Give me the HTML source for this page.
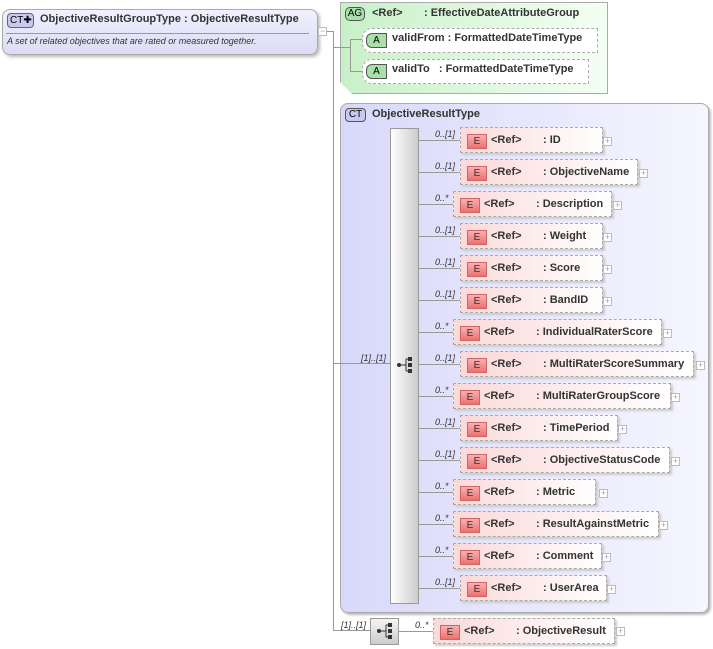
<!DOCTYPE html><html><head><style>
body{margin:0;width:713px;height:649px;background:#fff;position:relative;font-family:"Liberation Sans",sans-serif;overflow:hidden}
div{position:absolute;box-sizing:border-box}
.l{background:#999}
.e{height:26px;border:1px dashed #aaa;background:linear-gradient(to right,#fbd9d9,#fff);box-shadow:2px 2px 2px #ccc;font-size:11px;font-weight:bold;color:#333;white-space:nowrap}
.e .i{left:6px;top:6px;width:20px;height:15px;border:1px solid #c66;background:linear-gradient(#f8b0b0,#f07070);font-size:10px;font-weight:normal;text-align:center;line-height:14px;color:#333}
.e .r{left:30px;top:6px}
.e .n{left:82px;top:6px}
.p{width:9px;height:9px;border:1px solid #bbb;background:#fff;font-size:9px;line-height:7px;text-align:center;color:#aaa}
.c{font-size:9px;font-style:italic;color:#333}
</style></head><body>
<!-- top box -->
<div style="left:2px;top:9px;width:316px;height:46px;border:1px solid #aaa;border-radius:8px;background:linear-gradient(#f0f0ff,#dcdcf4);box-shadow:2px 2px 3px #bbb"></div>
<div style="left:7px;top:13px;width:27px;height:15px;border:1px solid #666;border-radius:4px;background:#c8c8f0;font-size:10px;line-height:13px;padding-left:2px">CT✚</div>
<div style="left:40px;top:13px;font-size:11px;font-weight:bold;color:#333">ObjectiveResultGroupType : ObjectiveResultType</div>
<div style="left:6px;top:33px;width:303px;height:1px;background:#999"></div>
<div style="left:7px;top:36px;font-size:9px;font-style:italic;color:#333">A set of related objectives that are rated or measured together.</div>
<div class="p" style="left:318px;top:27px">−</div>
<div class="l" style="left:327px;top:31px;width:6px;height:1px"></div>
<div class="l" style="left:333px;top:31px;width:1px;height:599px"></div>
<!-- AG -->
<div style="left:340px;top:2px;width:268px;height:92px;border:1px solid #aaa;background:linear-gradient(to right,#c8f0c8,#f4fff4);clip-path:polygon(0 0,100% 0,100% 100%,12px 100%,0 80px);box-shadow:2px 2px 2px #bbb"></div>
<div style="left:345px;top:7px;width:20px;height:14px;border:1px solid #555;border-radius:5px;background:#a8e0a8;font-size:10px;line-height:12px;text-align:center">AG</div>
<div style="left:372px;top:7px;font-size:11px;font-weight:bold;color:#333">&lt;Ref&gt;</div>
<div style="left:424px;top:7px;font-size:11px;font-weight:bold;color:#333">: EffectiveDateAttributeGroup</div>
<div class="l" style="left:333px;top:47px;width:17px;height:1px"></div>
<div class="l" style="left:350px;top:39px;width:1px;height:32px"></div>
<div class="l" style="left:350px;top:39px;width:12px;height:1px"></div>
<div class="l" style="left:350px;top:71px;width:12px;height:1px"></div>
<div style="left:362px;top:28px;width:236px;height:25px;border:1px dashed #aaa;background:#fff;border-radius:10px 0 0 10px"></div>
<div style="left:366px;top:33px;width:21px;height:15px;border:1px solid #555;border-radius:6px 0 0 6px;background:#a8e0a8;font-size:10px;text-align:center;line-height:13px">A</div>
<div style="left:392px;top:32px;font-size:11px;font-weight:bold;color:#333">validFrom : FormattedDateTimeType</div>
<div style="left:362px;top:59px;width:227px;height:25px;border:1px dashed #aaa;background:#fff;border-radius:10px 0 0 10px"></div>
<div style="left:366px;top:64px;width:21px;height:15px;border:1px solid #555;border-radius:6px 0 0 6px;background:#a8e0a8;font-size:10px;text-align:center;line-height:13px">A</div>
<div style="left:392px;top:63px;font-size:11px;font-weight:bold;color:#333">validTo &nbsp;&nbsp;: FormattedDateTimeType</div>
<!-- CT -->
<div style="left:340px;top:103px;width:369px;height:510px;border:1px solid #aaa;border-radius:8px;background:linear-gradient(to right,#d8d8fa,#f6f6ff);box-shadow:2px 2px 2px #bbb"></div>
<div style="left:345px;top:108px;width:21px;height:14px;border:1px solid #555;border-radius:4px;background:#c8c8f0;font-size:10px;line-height:12px;text-align:center">CT</div>
<div style="left:372px;top:108px;font-size:11px;font-weight:bold;color:#333">ObjectiveResultType</div>
<div class="l" style="left:333px;top:363px;width:57px;height:1px"></div>
<div class="c" style="left:361px;top:353px">[1]..[1]</div>
<div style="left:390px;top:128px;width:29px;height:476px;border:1px solid #999;background:linear-gradient(to right,#fff,#ccc)"></div>
<svg style="position:absolute;left:397px;top:357px" width="18" height="16"><circle cx="2" cy="8" r="2" fill="#333"/><line x1="2" y1="8" x2="9" y2="8" stroke="#333"/><line x1="9" y1="2" x2="9" y2="14" stroke="#333"/><line x1="9" y1="2" x2="14" y2="2" stroke="#333"/><line x1="9" y1="14" x2="14" y2="14" stroke="#333"/><rect x="11" y="0" width="4" height="4" fill="#333"/><rect x="11" y="6" width="4" height="4" fill="#333"/><rect x="11" y="12" width="4" height="4" fill="#333"/></svg>

<div class="l" style="left:419px;top:140px;width:41px;height:1px"></div><div class="c" style="left:435px;top:129px">0..[1]</div>
<div class="e" style="left:460px;top:127px;width:143px"><div class="i">E</div><div class="r">&lt;Ref&gt;</div><div class="n">: ID</div></div><div class="p" style="left:603px;top:137px">+</div>

<div class="l" style="left:419px;top:172px;width:41px;height:1px"></div><div class="c" style="left:435px;top:161px">0..[1]</div>
<div class="e" style="left:460px;top:159px;width:178px"><div class="i">E</div><div class="r">&lt;Ref&gt;</div><div class="n">: ObjectiveName</div></div><div class="p" style="left:639px;top:169px">+</div>

<div class="l" style="left:419px;top:204px;width:34px;height:1px"></div><div class="c" style="left:435px;top:193px">0..*</div>
<div class="e" style="left:453px;top:191px;width:159px"><div class="i">E</div><div class="r">&lt;Ref&gt;</div><div class="n">: Description</div></div><div class="p" style="left:613px;top:201px">+</div>

<div class="l" style="left:419px;top:236px;width:41px;height:1px"></div><div class="c" style="left:435px;top:225px">0..[1]</div>
<div class="e" style="left:460px;top:223px;width:143px"><div class="i">E</div><div class="r">&lt;Ref&gt;</div><div class="n">: Weight</div></div><div class="p" style="left:603px;top:233px">+</div>

<div class="l" style="left:419px;top:268px;width:41px;height:1px"></div><div class="c" style="left:435px;top:257px">0..[1]</div>
<div class="e" style="left:460px;top:255px;width:143px"><div class="i">E</div><div class="r">&lt;Ref&gt;</div><div class="n">: Score</div></div><div class="p" style="left:603px;top:265px">+</div>

<div class="l" style="left:419px;top:300px;width:41px;height:1px"></div><div class="c" style="left:435px;top:289px">0..[1]</div>
<div class="e" style="left:460px;top:287px;width:143px"><div class="i">E</div><div class="r">&lt;Ref&gt;</div><div class="n">: BandID</div></div><div class="p" style="left:603px;top:297px">+</div>

<div class="l" style="left:419px;top:332px;width:34px;height:1px"></div><div class="c" style="left:435px;top:321px">0..*</div>
<div class="e" style="left:453px;top:319px;width:209px"><div class="i">E</div><div class="r">&lt;Ref&gt;</div><div class="n">: IndividualRaterScore</div></div><div class="p" style="left:663px;top:329px">+</div>

<div class="l" style="left:419px;top:364px;width:41px;height:1px"></div><div class="c" style="left:435px;top:353px">0..[1]</div>
<div class="e" style="left:460px;top:351px;width:234px"><div class="i">E</div><div class="r">&lt;Ref&gt;</div><div class="n">: MultiRaterScoreSummary</div></div><div class="p" style="left:696px;top:361px">+</div>

<div class="l" style="left:419px;top:396px;width:34px;height:1px"></div><div class="c" style="left:435px;top:385px">0..*</div>
<div class="e" style="left:453px;top:383px;width:218px"><div class="i">E</div><div class="r">&lt;Ref&gt;</div><div class="n">: MultiRaterGroupScore</div></div><div class="p" style="left:671px;top:393px">+</div>

<div class="l" style="left:419px;top:428px;width:41px;height:1px"></div><div class="c" style="left:435px;top:417px">0..[1]</div>
<div class="e" style="left:460px;top:415px;width:158px"><div class="i">E</div><div class="r">&lt;Ref&gt;</div><div class="n">: TimePeriod</div></div><div class="p" style="left:618px;top:425px">+</div>

<div class="l" style="left:419px;top:460px;width:41px;height:1px"></div><div class="c" style="left:435px;top:449px">0..[1]</div>
<div class="e" style="left:460px;top:447px;width:210px"><div class="i">E</div><div class="r">&lt;Ref&gt;</div><div class="n">: ObjectiveStatusCode</div></div><div class="p" style="left:671px;top:457px">+</div>

<div class="l" style="left:419px;top:492px;width:34px;height:1px"></div><div class="c" style="left:435px;top:481px">0..*</div>
<div class="e" style="left:453px;top:479px;width:143px"><div class="i">E</div><div class="r">&lt;Ref&gt;</div><div class="n">: Metric</div></div><div class="p" style="left:599px;top:489px">+</div>

<div class="l" style="left:419px;top:524px;width:34px;height:1px"></div><div class="c" style="left:435px;top:513px">0..*</div>
<div class="e" style="left:453px;top:511px;width:206px"><div class="i">E</div><div class="r">&lt;Ref&gt;</div><div class="n">: ResultAgainstMetric</div></div><div class="p" style="left:659px;top:521px">+</div>

<div class="l" style="left:419px;top:556px;width:34px;height:1px"></div><div class="c" style="left:435px;top:545px">0..*</div>
<div class="e" style="left:453px;top:543px;width:149px"><div class="i">E</div><div class="r">&lt;Ref&gt;</div><div class="n">: Comment</div></div><div class="p" style="left:602px;top:553px">+</div>

<div class="l" style="left:419px;top:588px;width:41px;height:1px"></div><div class="c" style="left:435px;top:577px">0..[1]</div>
<div class="e" style="left:460px;top:575px;width:147px"><div class="i">E</div><div class="r">&lt;Ref&gt;</div><div class="n">: UserArea</div></div><div class="p" style="left:607px;top:585px">+</div>

<!-- bottom -->
<div class="l" style="left:333px;top:630px;width:37px;height:1px"></div>
<div class="c" style="left:341px;top:620px">[1]..[1]</div>
<div style="left:370px;top:618px;width:29px;height:27px;border:1px solid #999;background:linear-gradient(#f4f4f4,#ccc)"></div>
<svg style="position:absolute;left:377px;top:623px" width="18" height="16"><circle cx="2" cy="8" r="2" fill="#333"/><line x1="2" y1="8" x2="9" y2="8" stroke="#333"/><line x1="9" y1="2" x2="9" y2="14" stroke="#333"/><line x1="9" y1="2" x2="14" y2="2" stroke="#333"/><line x1="9" y1="14" x2="14" y2="14" stroke="#333"/><rect x="11" y="0" width="4" height="4" fill="#333"/><rect x="11" y="6" width="4" height="4" fill="#333"/><rect x="11" y="12" width="4" height="4" fill="#333"/></svg>
<div class="l" style="left:399px;top:631px;width:34px;height:1px"></div><div class="c" style="left:415px;top:620px">0..*</div>
<div class="e" style="left:433px;top:618px;width:182px"><div class="i">E</div><div class="r">&lt;Ref&gt;</div><div class="n">: ObjectiveResult</div></div><div class="p" style="left:616px;top:627px">+</div>
</body></html>
